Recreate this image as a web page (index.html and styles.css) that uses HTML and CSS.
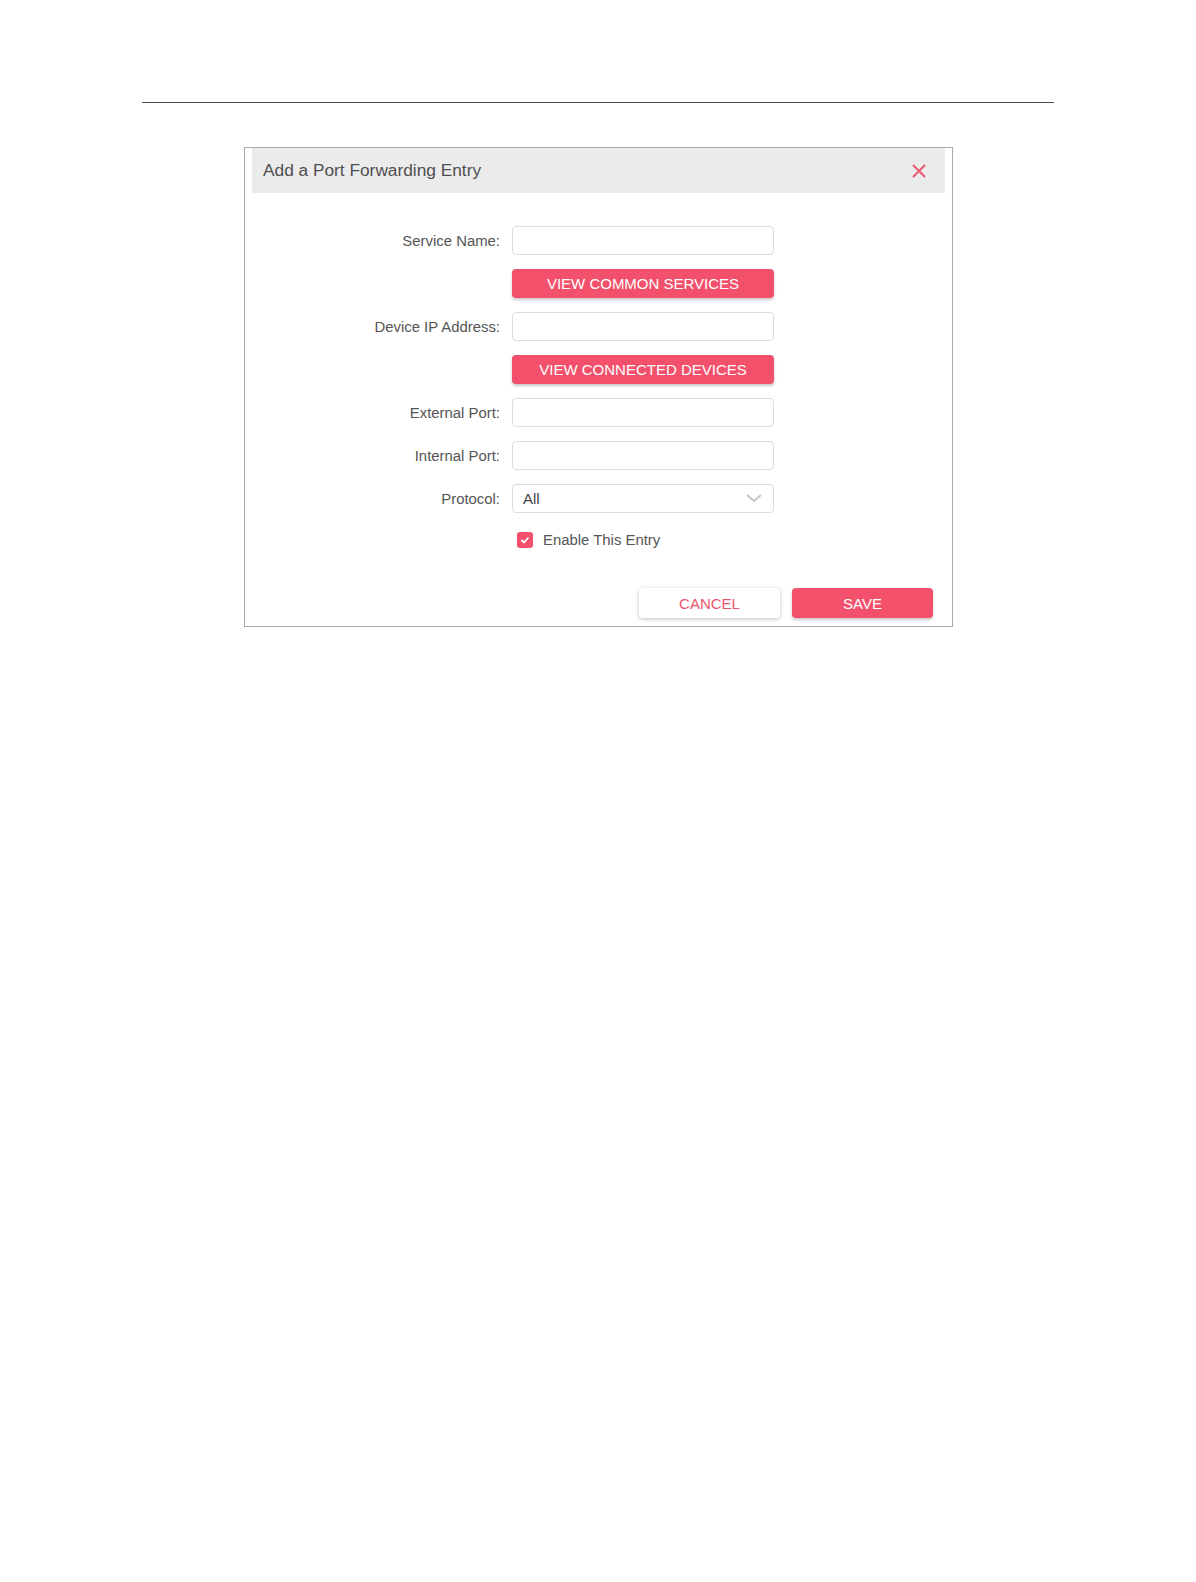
FILE: index.html
```html
<!DOCTYPE html>
<html lang="en">
  <head>
    <meta charset="UTF-8" />
    <title>Add a Port Forwarding Entry</title>
    <link rel="stylesheet" href="styles.css">
  </head>
  <body>
    <hr class="rule" />

    <section class="dialog">
      <header class="dialog-head">
        <h2>Add a Port Forwarding Entry</h2>
        <button class="close" aria-label="Close">
          <svg width="14" height="14" viewBox="0 0 14 14">
            <path d="M1 1l12 12M13 1L1 13" stroke="#ec5a74" stroke-width="2" />
          </svg>
        </button>
      </header>

      <form class="form">
        <label for="service">Service Name:</label>
        <input id="service" type="text" />

        <span></span>
        <button type="button" class="btn btn-primary">View common services</button>

        <label for="ip">Device IP Address:</label>
        <input id="ip" type="text" />

        <span></span>
        <button type="button" class="btn btn-primary">View connected devices</button>

        <label for="external">External Port:</label>
        <input id="external" type="text" />

        <label for="internal">Internal Port:</label>
        <input id="internal" type="text" />

        <label for="protocol">Protocol:</label>
        <div class="select" id="protocol">
          <span>All</span>
          <svg width="16" height="9" viewBox="0 0 16 9">
            <path d="M1 1l7 6 7-6" fill="none" stroke="#c4c4c4" stroke-width="2" />
          </svg>
        </div>

        <span></span>
        <label class="check">
          <span class="box">
            <svg width="10" height="8" viewBox="0 0 10 8">
              <path d="M1.5 4l2.5 2.5 4.5-5" fill="none" stroke="#fff" stroke-width="1.8" />
            </svg>
          </span>
          Enable This Entry
        </label>
      </form>

      <footer class="dialog-foot">
        <button type="button" class="btn btn-plain">Cancel</button>
        <button type="button" class="btn btn-primary">Save</button>
      </footer>
    </section>
  </body>
</html>
```

FILE: styles.css
```css
* {
  box-sizing: border-box;
}

body {
  margin: 0;
  padding: 102px 142px 0;
  font-family: "Liberation Sans", Arial, sans-serif;
  color: #555;
  background: #fff;
}

.rule {
  margin: 0;
  border: 0;
  border-top: 1px solid #4a4a4a;
  width: 912px;
}

.dialog {
  width: 709px;
  margin: 44px 0 0 102px;
  border: 1px solid #a9a9a9;
  padding: 0 7px 8px;
}

.dialog-head {
  display: flex;
  align-items: center;
  justify-content: space-between;
  height: 45px;
  padding: 0 19px 0 11px;
  background: #ebebeb;
}

.dialog-head h2 {
  margin: 0;
  font-size: 17.3px;
  font-weight: normal;
  color: #4f4f4f;
}

.close {
  display: flex;
  padding: 0;
  border: 0;
  background: none;
}

.form {
  display: grid;
  grid-template-columns: 248px 262px;
  column-gap: 12px;
  row-gap: 14px;
  align-items: center;
  padding-top: 33px;
}

.form > label {
  text-align: right;
  font-size: 14.9px;
  color: #555;
}

.form input,
.select {
  height: 29px;
  border: 1px solid #dcdcdc;
  border-radius: 4px;
  font: inherit;
  font-size: 14.9px;
  background: #fff;
}

.select {
  display: flex;
  align-items: center;
  justify-content: space-between;
  padding: 0 11px 0 10px;
  color: #444;
}

.btn {
  height: 29px;
  border: 0;
  border-radius: 4px;
  font: inherit;
  font-size: 15px;
  text-transform: uppercase;
}

.btn-primary {
  background: #f2506b;
  color: #fff;
  box-shadow: 0 2px 3px rgba(0, 0, 0, 0.22);
}

.btn-plain {
  background: #fff;
  color: #e9546e;
  box-shadow: 0 1px 4px rgba(0, 0, 0, 0.25);
}

.check {
  display: flex;
  align-items: center;
  gap: 10px;
  margin: 5px 0 0 5px;
  font-size: 14.9px;
  text-align: left;
}

.box {
  display: flex;
  align-items: center;
  justify-content: center;
  width: 16px;
  height: 16px;
  border-radius: 3px;
  background: #f2506b;
}

.dialog-foot {
  display: flex;
  justify-content: flex-end;
  gap: 12px;
  padding: 40px 12px 0 0;
}

.dialog-foot .btn {
  width: 141px;
  height: 30px;
}
```
